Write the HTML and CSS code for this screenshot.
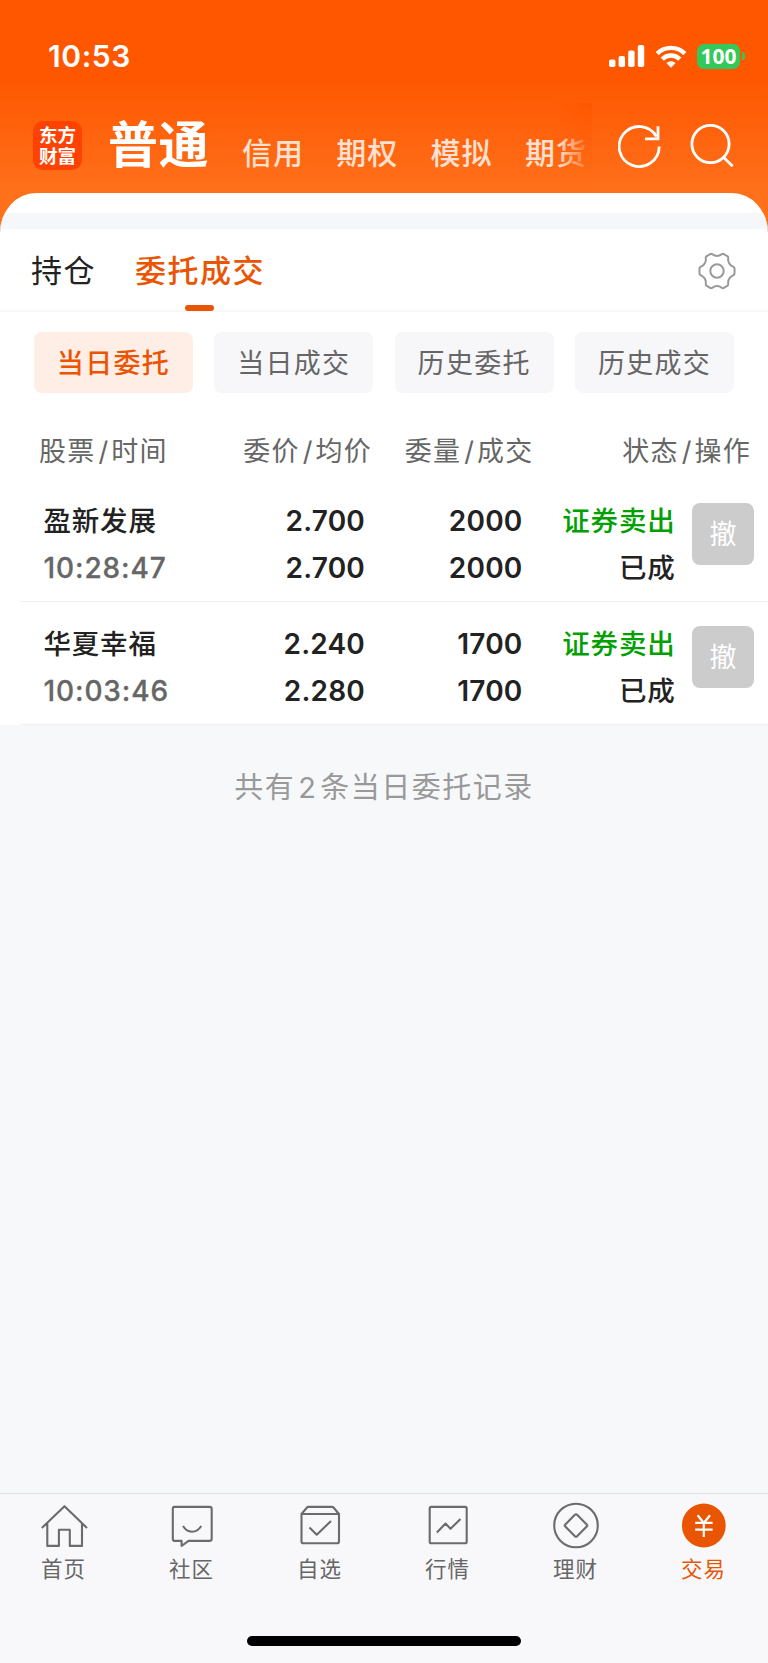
FILE: index.html
```
<!DOCTYPE html>
<html lang="zh-CN">

<head>
    <meta charset="UTF-8">
    <meta name="viewport" content="width=device-width, initial-scale=1">
    <title>委托成交</title>
    <link rel="stylesheet" href="styles.css">
</head>

<body>

    <header class="header">
        <div class="status-bar">
            <span class="clock">10:53</span>
            <div class="status-icons">
                <svg class="signal" width="36" height="22" viewBox="0 0 36 22" fill="#fff">
                    <rect x="0" y="14.5" width="6.4" height="7.5" rx="1.8" />
                    <rect x="9.6" y="11" width="6.4" height="11" rx="1.8" />
                    <rect x="19.2" y="5.5" width="6.4" height="16.5" rx="1.8" />
                    <rect x="28.8" y="0" width="6.4" height="22" rx="1.8" />
                </svg>
                <svg class="wifi" width="32" height="23" viewBox="0 0 32 23" fill="none" stroke="#fff" stroke-width="4.4">
                    <path d="M2.2 8.6a19.6 19.6 0 0 1 27.6 0" />
                    <path d="M7.2 14.1a12.5 12.5 0 0 1 17.6 0" />
                    <path d="M16 22.8l-4.6-4.7a6.6 6.6 0 0 1 9.2 0z" fill="#fff" stroke="none" />
                </svg>
                <span class="battery">100</span>
                <span class="battery-tip"></span>
            </div>
        </div>
        <div class="top-nav">
            <div class="logo">东方<br>财富</div>
            <nav class="markets">
                <a class="market active">普通</a>
                <a class="market">信用</a>
                <a class="market">期权</a>
                <a class="market">模拟</a>
                <a class="market">期货</a>
                <span class="fade"></span>
            </nav>
            <svg class="refresh" width="44" height="46" viewBox="0 0 44 46" fill="none" stroke="#fff" stroke-width="2.8">
                <path d="M41.2 23.5A20 20 0 1 1 38.5 13.5" />
                <path d="M40 3.2v12.6H27.1" />
            </svg>
            <svg class="search" width="44" height="46" viewBox="0 0 44 46" fill="none" stroke="#fff" stroke-width="2.8">
                <circle cx="20.5" cy="21" r="18.6" />
                <path d="M33 33.8l9.6 9.4" />
            </svg>
        </div>
    </header>

    <main class="sheet">
        <div class="band"></div>
        <div class="tabs">
            <a class="tab">持仓</a>
            <a class="tab active">委托成交</a>
            <svg class="gear" width="40" height="40" viewBox="0 0 40 40" fill="none" stroke="#999" stroke-width="2">
                <path d="M13.6 2.8C15 2.1 16 4.9 20 4.9S25 2.1 26.4 2.8L30.7 5.3C32.2 6.2 30 8.2 32 12S36.3 15 37.3 16.6Q37.9 20 37.3 23.4C36.3 25 34 24.2 32 28S32.2 33.8 30.7 34.7L26.4 37.2C25 37.9 24 35.1 20 35.1S15 37.9 13.6 37.2L9.3 34.7C7.8 33.8 10 31.8 8 28S3.7 25 2.7 23.4Q2.1 20 2.7 16.6C3.7 15 6 15.8 8 12S7.8 6.2 9.3 5.3Z" />
                <circle cx="20" cy="20" r="6.7" />
            </svg>
        </div>

        <div class="chips">
            <a class="chip active">当日委托</a>
            <a class="chip">当日成交</a>
            <a class="chip">历史委托</a>
            <a class="chip">历史成交</a>
        </div>

        <div class="row list-head">
            <span>股票<i>/</i>时间</span>
            <span>委价<i>/</i>均价</span>
            <span>委量<i>/</i>成交</span>
            <span>状态<i>/</i>操作</span>
        </div>

        <div class="row order">
            <div class="cell"><b>盈新发展</b><span class="time">10:28:47</span></div>
            <div class="cell num"><b>2.700</b><b>2.700</b></div>
            <div class="cell num"><b>2000</b><b>2000</b></div>
            <div class="cell"><b class="sell">证券卖出</b><b>已成</b></div>
            <button class="cancel">撤</button>
        </div>
        <div class="row order">
            <div class="cell"><b>华夏幸福</b><span class="time">10:03:46</span></div>
            <div class="cell num"><b>2.240</b><b>2.280</b></div>
            <div class="cell num"><b>1700</b><b>1700</b></div>
            <div class="cell"><b class="sell">证券卖出</b><b>已成</b></div>
            <button class="cancel">撤</button>
        </div>
    </main>

    <p class="summary">共有<i>2</i>条当日委托记录</p>

    <footer class="tab-bar">
        <div class="items">
            <a class="item">
                <svg width="48" height="48" viewBox="0 0 48 48">
                    <path d="M1.8 26L24.5 4.2 47 26M7.3 21.5V43.9H18.9V27.8H29.8V43.9H42V21.5" />
                </svg>
                <span>首页</span>
            </a>
            <a class="item">
                <svg width="48" height="48" viewBox="0 0 48 48">
                    <path d="M6.5 4.9H41.5Q43.7 4.9 43.7 7V36.7Q43.7 38.9 41.5 38.9H20.5L13.6 44V38.9H6.5Q4.8 38.9 4.8 36.7V7Q4.8 4.9 6.5 4.9Z" />
                    <path d="M15 24Q18.5 29.7 24 29.7T33.3 24" />
                </svg>
                <span>社区</span>
            </a>
            <a class="item">
                <svg width="48" height="48" viewBox="0 0 48 48">
                    <path d="M5.5 12V39.5Q5.5 41.3 7.5 41.3H41Q43 41.3 43 39.5V12L37.5 5.5Q37 4.9 36 4.9H12.5Q11.5 4.9 11 5.5ZM5.5 12H43" />
                    <path d="M13.5 25.5L20.7 32.7 35 19" />
                </svg>
                <span>自选</span>
            </a>
            <a class="item">
                <svg width="48" height="48" viewBox="0 0 48 48">
                    <rect x="5.7" y="4.9" width="37" height="36.4" rx="1.5" />
                    <path d="M12.9 30.5L21.5 21.5 26.5 26.8 36.5 17" />
                </svg>
                <span>行情</span>
            </a>
            <a class="item">
                <svg width="48" height="48" viewBox="0 0 48 48">
                    <circle cx="24" cy="23.5" r="21.8" />
                    <path d="M22.9 12.8Q24 11.7 25.1 12.8L34.7 22.4Q35.8 23.5 34.7 24.6L25.1 34.2Q24 35.3 22.9 34.2L13.3 24.6Q12.2 23.5 13.3 22.4Z" />
                </svg>
                <span>理财</span>
            </a>
            <a class="item active">
                <svg width="48" height="48" viewBox="0 0 48 48">
                    <circle class="disc" cx="23.8" cy="23.5" r="21.9" />
                    <path class="yen" d="M17.6 13.2L23.8 21 30 13.2M23.8 21V35M15.2 20.9H32.6M15.2 27.7H32.6" />
                </svg>
                <span>交易</span>
            </a>
        </div>
        <div class="home-indicator"></div>
    </footer>

</body>

</html>
```

FILE: styles.css
```
* {
    margin: 0;
    padding: 0;
    box-sizing: border-box;
}

body {
    display: flex;
    flex-direction: column;
    height: 1663px;
    overflow: hidden;
    background: #f7f8fa;
    color: #222;
    font-family: Inter, "Noto Sans CJK SC", sans-serif;
}

i {
    font-style: normal;
}

.header {
    height: 233px;
    margin-bottom: -40px;
    background: linear-gradient(#ff5600 75px, #ff701b 193px);
}

.status-bar {
    display: flex;
    justify-content: space-between;
    align-items: center;
    height: 112px;
    padding: 0 23px 0 48px;
    color: #fff;
}

.clock {
    font-size: 30px;
    font-weight: 600;
    letter-spacing: 0.6px;
}

.status-icons {
    display: flex;
    align-items: center;
}

.signal {
    margin-right: 10px;
}

.wifi {
    margin-right: 10px;
}

.battery {
    width: 43px;
    height: 25px;
    border-radius: 7px;
    background: #34c759;
    font: 700 21px/24px "Noto Sans", sans-serif;
    text-align: center;
}

.battery-tip {
    width: 3px;
    height: 8px;
    margin-left: 2px;
    border-radius: 0 4px 4px 0;
    background: #34c759;
}

.top-nav {
    display: flex;
    height: 81px;
    padding-left: 33px;
}

.logo {
    width: 49px;
    height: 49px;
    margin-top: 9px;
    padding-top: 4px;
    border-radius: 10px;
    background: #ff4201;
    color: #fff;
    font-size: 18.5px;
    font-weight: 700;
    line-height: 20.5px;
    text-align: center;
}

.markets {
    position: relative;
    display: flex;
    width: 485px;
    margin-left: 26px;
    white-space: nowrap;
}

.market {
    flex: none;
    width: 94.3px;
    color: #ffe0d1;
    font-size: 30px;
    font-weight: 500;
    letter-spacing: 1px;
    line-height: 83px;
}

.market.active {
    width: 134px;
    color: #fff;
    font-size: 50px;
    font-weight: 700;
    letter-spacing: 0.5px;
    line-height: 66px;
}

/* hides the end of the scrolling menu */
.fade {
    position: absolute;
    top: -9px;
    right: 1px;
    width: 34px;
    height: 89px;
    background: linear-gradient(#ff5600, #ff701b);
    -webkit-mask: linear-gradient(to right, transparent, #000);
    mask: linear-gradient(to right, transparent, #000);
}

.refresh {
    margin: 11px 0 0 25px;
}

.search {
    margin: 11px 0 0 28px;
}

.sheet {
    border-radius: 36px 36px 0 0 / 40px 40px 0 0;
    background: #fff;
    overflow: hidden;
}

.band {
    height: 16px;
    margin-top: 20px;
    background: #f6f7fa;
}

.tabs {
    display: flex;
    align-items: center;
    height: 83px;
    padding: 0 31px;
    border-bottom: 2px solid #f7f7f9;
    font-size: 31px;
    letter-spacing: 1.5px;
}

.tab {
    position: relative;
    margin-right: 39px;
    padding-top: 2px;
    line-height: 85px;
}

.tab.active {
    color: #ea5504;
    font-weight: 500;
}

.tab.active::after {
    content: "";
    position: absolute;
    left: 50%;
    bottom: 2px;
    width: 29px;
    height: 6px;
    margin-left: -15px;
    border-radius: 3px;
    background: #ea5504;
}

.gear {
    margin: 2px 0 0 auto;
}

.chips {
    display: grid;
    grid-template-columns: repeat(4, 1fr);
    gap: 21.5px;
    padding: 20px 34px 0;
}

.chip {
    height: 61px;
    border-radius: 8px;
    background: #f7f7fa;
    color: #666;
    font-size: 27px;
    letter-spacing: 1.3px;
    line-height: 64px;
    text-align: center;
}

.chip.active {
    background: #feeee6;
    color: #ea5504;
    font-weight: 500;
}

.row {
    display: grid;
    grid-template-columns: 120px 201.5px 157.5px 153px 62px;
    height: 123px;
    margin-left: 21px;
    padding-left: 22.5px;
}

.list-head {
    grid-template-columns: 128px 205px 161.5px 217.5px;
    height: 86px;
    padding: 20px 0 0 18px;
    color: #666;
    font-size: 27px;
    letter-spacing: 1.3px;
    line-height: 77px;
    text-align: right;
    white-space: nowrap;
}

.list-head i {
    margin: 0 1.5px 0 3px;
}

.order {
    padding-top: 19px;
    border-bottom: 1px solid #f0f0f2;
    font-size: 27.5px;
    letter-spacing: 0.8px;
    line-height: 47px;
    text-align: right;
    white-space: nowrap;
}

.cell:first-child,
.list-head span:first-child {
    text-align: left;
}

.cell b,
.time {
    display: block;
    font-weight: 500;
}

.num b {
    font-size: 28px;
    font-weight: 600;
    letter-spacing: 0.2px;
}

.time {
    color: #666;
    font-size: 28px;
    letter-spacing: 0.9px;
    -webkit-text-stroke: 0.3px #666;
}

.cell .sell {
    color: #00a000;
}

.cancel {
    width: 62px;
    height: 62px;
    margin: 5px 0 0 16.5px;
    padding-top: 2px;
    border: 0;
    border-radius: 8px;
    background: #ccc;
    color: #fff;
    font: 27px/60px Inter, "Noto Sans CJK SC", sans-serif;
}

.summary {
    margin-top: 38px;
    color: #999;
    font-size: 29px;
    letter-spacing: 1.5px;
    line-height: 50px;
    text-align: center;
}

.summary i {
    margin: 0 3px;
}

.tab-bar {
    height: 170px;
    margin-top: auto;
    border-top: 1px solid #e0e1e4;
    background: #f8f8fb;
}

.items {
    display: grid;
    grid-template-columns: repeat(6, 1fr);
    height: 142px;
    padding-top: 8px;
}

.item {
    display: flex;
    flex-direction: column;
    align-items: center;
    color: #666;
    font-size: 21.5px;
    letter-spacing: 1px;
    line-height: 38px;
}

.item span {
    margin-left: -1px;
}

.item svg {
    fill: none;
    stroke: #6b6b6b;
    stroke-width: 2.1;
    stroke-linejoin: round;
}

.item.active {
    color: #ea5504;
}

.item .disc {
    fill: #ea5504;
    stroke: none;
}

.item .yen {
    stroke: #fff;
    stroke-width: 2.2;
}

.home-indicator {
    width: 274px;
    height: 10px;
    margin: 0 auto;
    border-radius: 5px;
    background: #000;
}
```
